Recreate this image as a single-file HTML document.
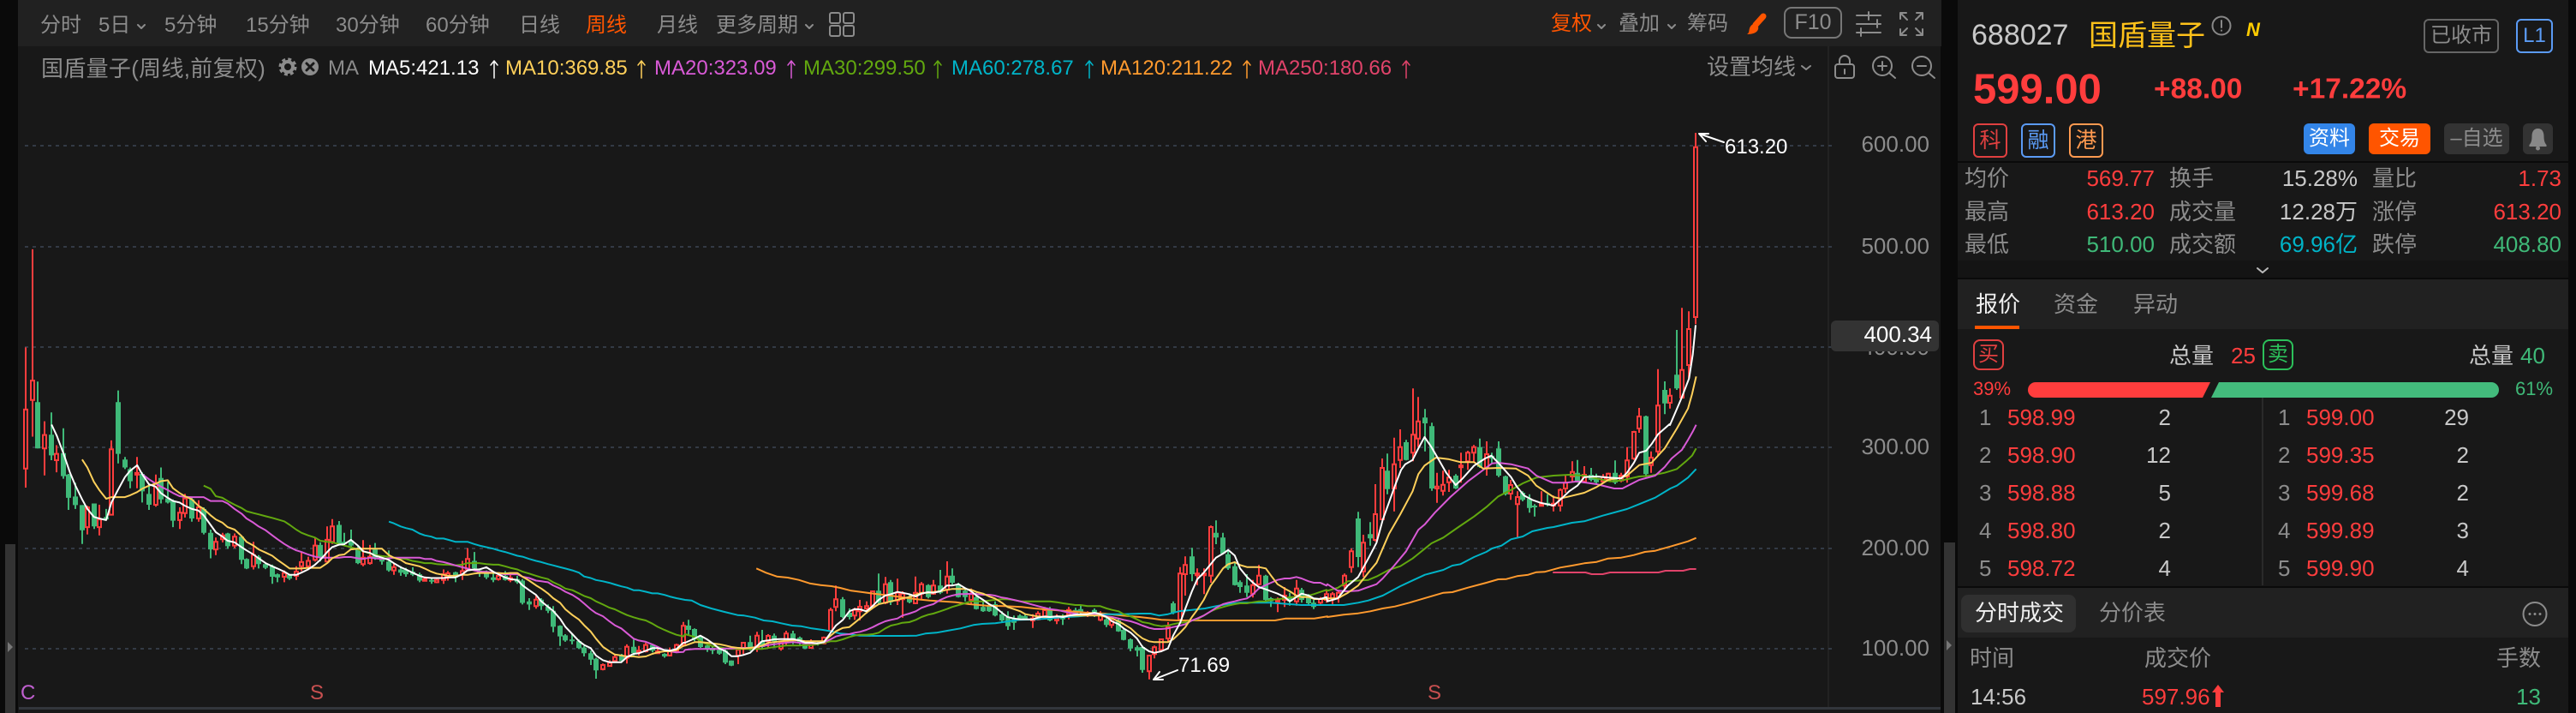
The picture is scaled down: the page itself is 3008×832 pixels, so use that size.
<!DOCTYPE html>
<html lang="zh"><head><meta charset="utf-8"><title>国盾量子</title>
<style>
html,body{margin:0;padding:0;width:3008px;height:832px;overflow:hidden;background:#0a0a0a}
body{position:relative;font-family:"Liberation Sans","Noto Sans CJK SC",sans-serif;color:#8c8c8c}
.b{position:absolute}
svg{position:absolute;left:0;top:0}
.t{position:absolute;white-space:nowrap;line-height:1;font-size:26px;transform:translateY(-50%)}
.r{transform:translate(-100%,-50%)}
.s24{font-size:24px}.red{color:#ff3d3d}.grn{color:#3fb978}.wht{color:#c8c8c8}.cyn{color:#00b4c8}
.box{position:absolute;box-sizing:border-box;border:2px solid;border-radius:6px;display:flex;align-items:center;justify-content:center;line-height:1}
.btn{position:absolute;border-radius:6px;display:flex;align-items:center;justify-content:center;line-height:1;font-size:24px}
</style></head><body>
<div class="b" style="left:21px;top:0;width:2246px;height:54px;background:#212121"></div>
<div class="b" style="left:21px;top:54px;width:2245px;height:778px;background:#181818"></div>
<div class="b" style="left:22px;top:825px;width:2244px;height:3px;background:#33363c"></div>
<div class="b" style="left:2134px;top:54px;width:2px;height:771px;background:#222"></div>
<div class="b" style="left:6px;top:635px;width:12px;height:197px;background:#333"></div>
<div class="b" style="left:2270px;top:633px;width:13px;height:199px;background:#333"></div>

<div class="b" style="left:2286px;top:0;width:713px;height:188px;background:#181818"></div>
<div class="b" style="left:2286px;top:190px;width:713px;height:114px;background:#181818"></div>
<div class="b" style="left:2286px;top:304px;width:713px;height:20px;background:#141414"></div>
<div class="b" style="left:2286px;top:326px;width:713px;height:58px;background:#212121"></div>
<div class="b" style="left:2286px;top:384px;width:713px;height:300px;background:#181818"></div>
<div class="b" style="left:2286px;top:686px;width:713px;height:58px;background:#212121"></div>
<div class="b" style="left:2286px;top:744px;width:713px;height:88px;background:#181818"></div>
<div class="b" style="left:2306px;top:380px;width:52px;height:4px;background:#ff5500"></div>
<div class="b" style="left:2641px;top:464px;width:2px;height:219px;background:#2a2a2a"></div>
<div class="b" style="left:2290px;top:694px;width:134px;height:44px;background:#303030;border-radius:8px"></div>
<div class="b" style="left:2946px;top:144px;width:35px;height:36px;background:#333;border-radius:6px"></div>

<svg id="chart" width="3008" height="832" viewBox="0 0 3008 832" fill="none"></svg>

<svg width="3008" height="832" viewBox="0 0 3008 832" fill="none" stroke-linecap="round" stroke-linejoin="round">
 <g stroke="#8c8c8c" stroke-width="2" fill="none">
  <path d="M161 29l4 4 4-4M941 29l4 4 4-4M1866 29l4 4 4-4M1948 29l4 4 4-4M2104 77l5 4 5-4"/>
  <rect x="969" y="15" width="12" height="12" rx="2"/><rect x="985" y="15" width="12" height="12" rx="2"/>
  <rect x="969" y="30" width="12" height="12" rx="2"/><rect x="985" y="30" width="12" height="12" rx="2"/>
  <path d="M2168 18h28M2168 28h28M2168 38h28M2182 14v9M2192 23v9M2173 33v9"/>
  <path d="M2219 22v-7h7M2219 15l8 8M2245 22v-7h-7M2245 15l-8 8M2219 34v7h7M2219 41l8-8M2245 34v7h-7M2245 41l-8-8"/>
  <rect x="2143" y="75" width="22" height="16" rx="3"/><path d="M2148 75v-4a6 6 0 0 1 12 0v4M2154 81v5"/>
  <circle cx="2198" cy="77" r="11"/><path d="M2206 85l7 6M2193 77h10M2198 72v10"/>
  <circle cx="2244" cy="77" r="11"/><path d="M2252 85l7 6M2239 77h10"/>
  <circle cx="2594" cy="30" r="10.500" stroke="#888"/>
  <path d="M2594 24v8M2594 35.500v.3" stroke="#888"/>
  <circle cx="2960" cy="716.500" r="13.500"/>
 </g>
 <g fill="#8c8c8c" stroke="none">
  <circle cx="2954" cy="716.500" r="1.500"/><circle cx="2960" cy="716.500" r="1.500"/><circle cx="2966" cy="716.500" r="1.500"/>
 </g>
 <circle cx="336" cy="78" r="8" stroke="#8c8c8c" stroke-width="5" stroke-dasharray="3.500 2.780" stroke-linecap="butt"/>
 <circle cx="336" cy="78" r="6" stroke="#8c8c8c" stroke-width="4"/>
 <circle cx="362" cy="78" r="10" fill="#8c8c8c"/>
 <path d="M358 74l8 8M366 74l-8 8" stroke="#181818" stroke-width="3"/>
 <path d="M2059 19l-9 10" stroke="#ff5500" stroke-width="7"/>
 <path d="M2049 28c3 1 5 3 4 6-1 4-6 6-13 6 3-2 2-4 3-7 1-3 3-5 6-5z" fill="#ff5500"/>
 <!-- MA arrows -->
 <g stroke-width="1.500">
  <path d="M577 91V71M573 76l4-5 4 5" stroke="#ffffff"/>
  <path d="M749 91V71M745 76l4-5 4 5" stroke="#ffd05a"/>
  <path d="M924 91V71M920 76l4-5 4 5" stroke="#d95ad6"/>
  <path d="M1095 91V71M1091 76l4-5 4 5" stroke="#62a80f"/>
  <path d="M1272 91V71M1268 76l4-5 4 5" stroke="#00b4c8"/>
  <path d="M1456 91V71M1452 76l4-5 4 5" stroke="#ff9a2e"/>
  <path d="M1642 91V71M1638 76l4-5 4 5" stroke="#e0436a"/>
 </g>
 <!-- annotations -->
 <path d="M2013 166L1984 156M1984 156l11 0M1984 156l8 9" stroke="#fff" stroke-width="2"/>
 <path d="M1375 782L1347 793M1347 793h11M1347 793l7-9" stroke="#fff" stroke-width="2"/>
 <!-- side arrows -->
 <path d="M9 749l6 6-6 6z" fill="#777"/><path d="M2273 747l6 6-6 6z" fill="#777"/>
 <!-- depth bar -->
 <path d="M2377 446H2581L2572 464H2377a9 9 0 0 1 0-18z" fill="#ff3d3d"/>
 <path d="M2591 446H2909a9 9 0 0 1 0 18H2582z" fill="#43bb7c"/>
 <path d="M2303 313l6 5 6-5" transform="translate(333 0)" stroke="#bbb" stroke-width="2"/>
 <!-- bell -->
 <path d="M2963.500 150c-5 0-7 4-7 9 0 5-1 8-3 10v2h20v-2c-2-2-3-5-3-10 0-5-2-9-7-9z" fill="#888"/>
 <circle cx="2963.500" cy="173" r="2.500" fill="#888"/>
 <!-- tick arrow -->
 <path d="M2590 799l7 9h-4v17h-6v-17h-4z" fill="#ff3d3d"/>
</svg>

<!-- toolbar -->
<span class="t s24" style="left:47px;top:30px">分时</span>
<span class="t s24" style="left:115px;top:30px">5日</span>
<span class="t s24" style="left:192px;top:30px">5分钟</span>
<span class="t s24" style="left:287px;top:30px">15分钟</span>
<span class="t s24" style="left:392px;top:30px">30分钟</span>
<span class="t s24" style="left:497px;top:30px">60分钟</span>
<span class="t s24" style="left:606px;top:30px">日线</span>
<span class="t s24" style="left:684px;top:30px;color:#ff5500">周线</span>
<span class="t s24" style="left:767px;top:30px">月线</span>
<span class="t s24" style="left:836px;top:30px">更多周期</span>
<span class="t s24" style="left:1811px;top:28px;color:#ff5500">复权</span>
<span class="t s24" style="left:1890px;top:28px">叠加</span>
<span class="t s24" style="left:1970px;top:28px">筹码</span>
<div class="box" style="left:2083px;top:8px;width:68px;height:37px;border-color:#777;border-radius:9px;font-size:25px;color:#8c8c8c">F10</div>

<!-- MA legend -->
<span class="t" style="left:48px;top:80px;letter-spacing:.3px">国盾量子(周线,前复权)</span>
<span class="t s24" style="left:383px;top:80px">MA</span>
<span class="t s24" style="left:430px;top:80px;color:#fff">MA5:421.13</span>
<span class="t s24" style="left:590px;top:80px;color:#ffd05a">MA10:369.85</span>
<span class="t s24" style="left:764px;top:80px;color:#d95ad6">MA20:323.09</span>
<span class="t s24" style="left:938px;top:80px;color:#62a80f">MA30:299.50</span>
<span class="t s24" style="left:1111px;top:80px;color:#00b4c8">MA60:278.67</span>
<span class="t s24" style="left:1285px;top:80px;color:#ff9a2e">MA120:211.22</span>
<span class="t s24" style="left:1469px;top:80px;color:#e0436a">MA250:180.66</span>
<span class="t" style="left:1993px;top:78px">设置均线</span>

<!-- axis -->
<span class="t r" style="left:2253px;top:168px">600.00</span>
<span class="t r" style="left:2253px;top:287px">500.00</span>
<span class="t r" style="left:2253px;top:405px">400.00</span>
<span class="t r" style="left:2253px;top:521px">300.00</span>
<span class="t r" style="left:2253px;top:639px">200.00</span>
<span class="t r" style="left:2253px;top:756px">100.00</span>
<div class="b" style="left:2138px;top:374px;width:126px;height:36px;background:#333;border-radius:6px"></div>
<span class="t r" style="left:2256px;top:390px;color:#fff">400.34</span>
<span class="t" style="left:2014px;top:172px;font-size:24px;color:#fff">613.20</span>
<span class="t" style="left:1376px;top:777px;font-size:24px;color:#fff">71.69</span>
<span class="t s24" style="left:24px;top:809px;color:#c060d0">C</span>
<span class="t s24" style="left:362px;top:809px;color:#c85050">S</span>
<span class="t s24" style="left:1667px;top:809px;color:#c85050">S</span>

<!-- header -->
<span class="t" style="left:2302px;top:41px;font-size:34px;color:#c8c8c8">688027</span>
<span class="t" style="left:2439px;top:42px;font-size:34px;color:#ffc21a">国盾量子</span>
<span class="t" style="left:2623px;top:35px;font-size:22px;font-weight:bold;font-style:italic;color:#ffcc00">N</span>
<div class="box" style="left:2830px;top:22px;width:88px;height:40px;border-color:#666;color:#8c8c8c;font-size:24px">已收市</div>
<div class="box" style="left:2938px;top:22px;width:43px;height:40px;border-color:#5b9bf5;color:#5b9bf5;font-size:24px">L1</div>
<span class="t" style="left:2304px;top:105px;font-size:49px;font-weight:bold;color:#ff3d3d">599.00</span>
<span class="t" style="left:2515px;top:104px;font-size:33.500px;font-weight:bold;color:#ff3d3d">+88.00</span>
<span class="t" style="left:2677px;top:104px;font-size:33.500px;font-weight:bold;color:#ff3d3d">+17.22%</span>
<div class="box" style="left:2304px;top:144px;width:40px;height:40px;border-color:#e04040;color:#e04040;font-size:25px">科</div>
<div class="box" style="left:2360px;top:144px;width:40px;height:40px;border-color:#5b9bf5;color:#5b9bf5;font-size:25px">融</div>
<div class="box" style="left:2416px;top:144px;width:40px;height:40px;border-color:#ff9a50;color:#ff9a50;font-size:25px">港</div>
<div class="btn" style="left:2690px;top:144px;width:60px;height:36px;background:#3385e8;color:#fff">资料</div>
<div class="btn" style="left:2766px;top:144px;width:72px;height:36px;background:#ff5500;color:#fff">交易</div>
<div class="btn" style="left:2854px;top:144px;width:76px;height:36px;background:#333;color:#8c8c8c">–自选</div>

<!-- stats -->
<span class="t" style="left:2294px;top:208px">均价</span><span class="t r red" style="left:2516px;top:208px">569.77</span>
<span class="t" style="left:2533px;top:208px">换手</span><span class="t r wht" style="left:2753px;top:208px">15.28%</span>
<span class="t" style="left:2770px;top:208px">量比</span><span class="t r red" style="left:2991px;top:208px">1.73</span>
<span class="t" style="left:2294px;top:247px">最高</span><span class="t r red" style="left:2516px;top:247px">613.20</span>
<span class="t" style="left:2533px;top:247px">成交量</span><span class="t r wht" style="left:2753px;top:247px">12.28万</span>
<span class="t" style="left:2770px;top:247px">涨停</span><span class="t r red" style="left:2991px;top:247px">613.20</span>
<span class="t" style="left:2294px;top:285px">最低</span><span class="t r grn" style="left:2516px;top:285px">510.00</span>
<span class="t" style="left:2533px;top:285px">成交额</span><span class="t r cyn" style="left:2753px;top:285px">69.96亿</span>
<span class="t" style="left:2770px;top:285px">跌停</span><span class="t r grn" style="left:2991px;top:285px">408.80</span>

<span class="t" style="left:2307px;top:355px;color:#f0f0f0">报价</span>
<span class="t" style="left:2398px;top:355px">资金</span>
<span class="t" style="left:2491px;top:355px">异动</span>

<!-- order book -->
<div class="box" style="left:2304px;top:396px;width:36px;height:36px;border-color:#e04040;color:#e04040;border-radius:8px;font-size:24px">买</div>
<span class="t wht" style="left:2533px;top:415px">总量</span><span class="t red" style="left:2605px;top:415px">25</span>
<div class="box" style="left:2642px;top:396px;width:36px;height:36px;border-color:#2cc05a;color:#2cc05a;border-radius:8px;font-size:24px">卖</div>
<span class="t wht" style="left:2883px;top:415px">总量</span><span class="t grn" style="left:2943px;top:415px">40</span>
<span class="t red" style="left:2304px;top:454px;font-size:22px">39%</span>
<span class="t grn" style="left:2937px;top:454px;font-size:22px">61%</span>

<span class="t" style="left:2311px;top:487px">1</span><span class="t red" style="left:2344px;top:487px">598.99</span><span class="t r wht" style="left:2535px;top:487px">2</span>
<span class="t" style="left:2311px;top:531px">2</span><span class="t red" style="left:2344px;top:531px">598.90</span><span class="t r wht" style="left:2535px;top:531px">12</span>
<span class="t" style="left:2311px;top:575px">3</span><span class="t red" style="left:2344px;top:575px">598.88</span><span class="t r wht" style="left:2535px;top:575px">5</span>
<span class="t" style="left:2311px;top:619px">4</span><span class="t red" style="left:2344px;top:619px">598.80</span><span class="t r wht" style="left:2535px;top:619px">2</span>
<span class="t" style="left:2311px;top:663px">5</span><span class="t red" style="left:2344px;top:663px">598.72</span><span class="t r wht" style="left:2535px;top:663px">4</span>
<span class="t" style="left:2660px;top:487px">1</span><span class="t red" style="left:2693px;top:487px">599.00</span><span class="t r wht" style="left:2883px;top:487px">29</span>
<span class="t" style="left:2660px;top:531px">2</span><span class="t red" style="left:2693px;top:531px">599.35</span><span class="t r wht" style="left:2883px;top:531px">2</span>
<span class="t" style="left:2660px;top:575px">3</span><span class="t red" style="left:2693px;top:575px">599.68</span><span class="t r wht" style="left:2883px;top:575px">2</span>
<span class="t" style="left:2660px;top:619px">4</span><span class="t red" style="left:2693px;top:619px">599.89</span><span class="t r wht" style="left:2883px;top:619px">3</span>
<span class="t" style="left:2660px;top:663px">5</span><span class="t red" style="left:2693px;top:663px">599.90</span><span class="t r wht" style="left:2883px;top:663px">4</span>

<!-- trades -->
<span class="t" style="left:2306px;top:715px;color:#f0f0f0">分时成交</span>
<span class="t" style="left:2451px;top:715px">分价表</span>
<span class="t" style="left:2300px;top:768px">时间</span>
<span class="t" style="left:2504px;top:768px">成交价</span>
<span class="t r" style="left:2967px;top:768px">手数</span>
<span class="t wht" style="left:2301px;top:813px">14:56</span>
<span class="t red" style="left:2501px;top:813px">597.96</span>
<span class="t r grn" style="left:2967px;top:813px">13</span>

<script>
(function(){
var Z={a:[function(p){return p/1.96},function(p){return 250+p/2.69}],
b:[function(p){return 800+p/1.96},function(p){return 500+p/3}],
c:[function(p){return 1550+p/2.09},function(p){return 420+p/3}],
d:[function(p){return 1850+p/3},function(p){return 130+p/3}]};
var C={
a:"59 r 418 613 798 858;74 r 110 522 583 698;86 g 525 590 735 735;101 r 650 693 735 820;117 g 622 692 757 772;129 r 725 752 772 810;145 g 672 750 822 830;157 g 815 817 890 928;172 g 843 886 913 925;188 g 913 913 992 1035;200 r 915 920 982 1005;215 g 908 908 980 988;227 r 912 958 982 1008;243 g 925 950 958 960;255 r 710 738 943 943;270 g 553 590 752 782;286 g 762 770 795 800;298 g 795 800 838 860;313 r 762 812 815 860;325 g 810 815 870 905;341 g 845 878 912 928;356 r 817 845 912 918;368 g 795 828 895 908;384 g 840 892 905 908;396 g 895 900 962 982;411 r 920 937 960 988;423 r 878 892 938 952;439 g 888 895 955 965;454 r 898 920 955 965;466 g 920 925 1000 1005;482 g 990 1000 1052 1080;494 r 1015 1028 1052 1070;509 r 1000 1008 1020 1030;521 g 1000 1002 1042 1050;537 r 1002 1012 1040 1048;553 g 1010 1012 1085 1098;564 g 1080 1082 1112 1114;580 r 1028 1070 1105 1115;592 g 1070 1075 1098 1112;608 g 1095 1098 1110 1114;623 g 1100 1105 1138 1160;635 g 1128 1130 1140 1155;651 r 1118 1126 1138 1155;663 g 1130 1132 1144 1148;678 r 1105 1122 1135 1148;690 r 1060 1092 1105 1120;705 r 1075 1088 1105 1112;721 r 1015 1040 1085 1090;733 g 1030 1038 1078 1090;749 r 980 1022 1090 1092;760 r 957 980 1028 1035;776 g 963 975 1035 1040;788 g 1000 1028 1035 1040;803 g 990 1024 1040 1052;819 g 1040 1050 1095 1098;831 r 1023 1078 1098 1105;847 r 1038 1075 1095 1100;859 g 1032 1052 1080 1085;874 g 1078 1082 1090 1100;890 g 1055 1090 1118 1122;901 r 1095 1108 1118 1132;917 g 1105 1115 1125 1135;929 g 1110 1116 1130 1138;944 g 1108 1122 1132 1136;960 g 1125 1130 1150 1155;972 r 1140 1145 1148 1150;987 g 1140 1148 1152 1160;999 r 1145 1148 1155 1158;1015 r 1115 1130 1148 1160;1026 r 1120 1127 1140 1150;1042 g 1122 1124 1140 1155;1058 r 1088 1120 1130 1148;1070 r 1048 1082 1115 1120;1085 g 1060 1088 1112 1120;1097 g 1112 1118 1125 1138;1113 g 1118 1128 1140 1145;1129 g 1128 1140 1148 1155;1141 r 1130 1135 1145 1150;1156 g 1120 1135 1148 1150;1168 r 1128 1142 1148 1155;1184 g 1135 1145 1155 1160;1196 g 1145 1150 1220 1225;1211 g 1205 1215 1225 1242;1227 r 1195 1210 1230 1238;1239 g 1205 1210 1230 1242;1254 g 1225 1232 1245 1252;1266 g 1230 1245 1295 1312;1282 g 1290 1292 1325 1355;1294 g 1318 1322 1338 1342;1310 g 1318 1335 1337 1350;1325 g 1335 1340 1362 1365;1337 g 1355 1360 1378 1388;1352 g 1370 1378 1398 1415;1364 g 1392 1395 1432 1458;1380 r 1410 1415 1428 1432;1395 r 1400 1408 1418 1420;1407 r 1382 1390 1402 1405;1422 g 1380 1385 1402 1405;1435 r 1350 1358 1392 1410;1450 g 1335 1358 1378 1385;1462 r 1355 1370 1375 1385;1478 r 1345 1352 1372 1375;1493 g 1350 1352 1370 1375;1505 r 1365 1372 1378 1380;1521 g 1378 1380 1388 1392;1533 r 1360 1372 1385 1388;1548 r 1348 1352 1372 1375;1564 r 1280 1292 1352 1358",
b:"8 g 670 690 705 725;22 g 700 702 738 745;35 g 725 728 765 768;50 g 755 760 772 782;63 g 762 768 778 790;78 g 770 775 788 792;93 g 768 778 820 825;106 g 812 812 830 832;121 r 770 775 795 825;133 r 748 750 770 790;149 g 725 748 775 778;164 r 712 725 770 782;176 g 705 745 765 770;191 r 720 726 745 768;204 g 718 725 745 768;219 r 745 750 770 778;231 r 708 718 745 760;247 g 708 718 740 755;262 g 728 732 752 760;275 g 745 752 770 772;289 r 738 748 768 770;303 g 745 750 755 760;318 r 728 732 752 755;333 r 628 635 708 715;345 r 550 598 625 640;361 g 590 598 660 664;376 g 630 645 660 668;388 r 628 635 655 670;400 r 600 624 640 672;415 r 605 622 630 648;430 r 568 570 620 630;443 g 508 568 610 615;458 r 520 545 610 615;471 g 530 538 608 618;486 r 526 575 602 618;497 r 570 578 598 662;513 g 578 590 608 612;528 r 518 575 612 615;541 r 538 545 578 600;556 g 545 548 590 595;568 r 530 550 578 582;584 g 495 550 575 580;599 r 465 518 565 578;611 g 490 515 540 548;626 g 540 545 590 592;640 g 560 568 590 605;655 r 560 580 600 618;667 g 570 590 632 634;682 g 600 625 640 642;696 g 615 620 640 642;709 g 605 615 655 658;725 g 640 650 672 678;738 g 640 660 692 705;752 g 655 665 680 705;767 g 650 655 665 672;779 g 650 656 666 672;796 r 650 665 672 698;808 r 640 648 668 672;823 r 625 636 660 668;835 g 625 632 672 675;851 r 650 665 672 685;865 g 650 660 668 688;879 r 625 635 652 668;893 g 628 635 648 655;905 g 620 632 645 652;921 r 640 645 652 660;937 g 630 635 650 660;950 r 640 648 670 675;965 g 660 668 688 695;977 r 668 675 688 698;992 g 665 672 710 712;1004 g 700 705 740 742;1020 g 735 738 770 780;1034 g 760 766 778 798;1047 g 760 765 845 855;1062 r 792 795 850 878;1074 r 760 766 790 805;1090 r 735 738 775 782;1105 r 678 695 735 745;1117 g 605 612 645 650;1133 r 485 508 670 675;1145 r 448 478 510 585;1160 g 418 448 510 535;1172 r 490 508 512 548;1187 r 490 508 512 580;1203 r 340 345 515 540;1215 g 322 365 382 405;1231 g 365 382 438 440;1243 g 425 440 490 495;1258 g 470 482 548 550;1270 g 532 538 555 575;1286 g 510 550 575 590;1300 r 530 548 578 592;1313 r 478 515 545 550;1329 g 512 515 600 605;1341 g 590 594 605 625;1356 r 592 600 605 643;1372 r 555 585 600 625;1384 g 575 590 605 620;1399 r 530 560 605 620;1411 g 558 565 600 610;1427 g 580 590 612 615;1439 g 600 610 625 632;1454 r 590 597 610 618;1468 r 568 580 600 610",
c:"12 r 812 820 835 855;27 r 805 815 830 850;42 r 748 755 790 810;58 r 660 670 725 745;75 g 532 555 690 725;88 r 612 640 740 760;104 g 568 610 625 650;117 r 435 540 630 635;134 r 345 378 558 560;147 g 328 388 452 470;163 r 272 365 450 530;178 r 243 305 350 378;192 g 280 288 350 352;208 r 100 262 325 355;222 r 130 215 275 305;238 g 172 202 222 320;254 g 220 232 450 458;267 r 395 443 450 500;283 r 388 437 458 475;297 r 385 412 428 462;313 g 400 405 450 452;325 r 325 370 375 430;343 r 318 325 355 385;358 r 298 305 325 358;372 g 275 305 375 378;388 r 285 330 378 405;402 g 325 335 345 360;417 g 285 310 405 410;434 g 405 407 470 475;448 r 420 438 468 490;463 r 460 480 505 620;477 g 460 465 490 495;493 g 470 485 518 535;506 g 505 510 515 548;522 r 460 505 510 512;537 g 470 500 508 512;552 r 475 503 510 530;568 r 450 455 510 530;582 r 405 430 450 465;597 r 355 392 408 425;610 g 350 395 425 430;627 r 372 402 425 432;644 g 378 402 420 425;657 g 398 415 428 435;672 r 400 410 425 432;686 r 395 398 420 425;703 g 352 395 430 435;717 r 395 405 422 428;731 r 305 352 408 430;748 r 248 252 345 350;761 r 168 198 240 255;778 g 195 197 400 410;791 r 320 342 368 395;807 r 32 160 320 335",
d:"282 g 945 975 1022 1060;300 r 970 995 1020 1040;324 g 765 922 970 975;342 r 688 905 1002 1005;366 r 700 762 888 935;390 r 75 125 720 745"};
var L=[
["#e0436a",[["c","550,744 630,744 645,750 672,750 690,744 808,744 825,738 868,738 885,732 900,732"]]],
["#ff9a2e",[["b","163,490 185,505 210,518 235,522 260,530 285,542 310,548 335,552 355,558 380,568 410,574 440,580 470,585 500,592 530,598 560,602 590,605 620,608 650,615 690,620 730,622 770,625 800,630 840,635 880,640 920,645 960,648 1000,655 1040,660 1070,665 1090,670 1130,672 1200,672 1280,672 1350,672 1375,665 1440,665 1470,658"],["c","0,900 40,892 75,887 105,880 135,870 165,863 200,850 240,833 283,815 305,813 343,797 388,780 417,768 437,767 463,757 490,752 510,743 530,742 568,727 597,720 627,712 657,707 685,695 717,692 748,683 775,672 800,668 840,652 880,635 900,623"]]],
["#00b4c8",[["a","890,965 901,970 917,980 929,985 944,990 960,1002 972,1008 987,1012 999,1018 1015,1018 1026,1022 1042,1028 1058,1028 1070,1028 1085,1035 1097,1040 1113,1045 1129,1050 1141,1055 1156,1060 1168,1065 1184,1072 1196,1075 1211,1082 1227,1088 1239,1092 1254,1098 1266,1102 1282,1108 1294,1112 1310,1118 1325,1125 1337,1137 1352,1142 1364,1148 1380,1152 1395,1157 1407,1162 1422,1168 1435,1172 1450,1180 1462,1180 1478,1185 1493,1190 1505,1190 1521,1195 1533,1200 1548,1205"],["b","0,600 15,602 35,618 60,630 90,642 120,653 135,655 160,662 180,672 200,675 220,682 245,690 265,692 290,700 315,705 335,710 355,718 375,720 400,725 430,726 470,726 500,726 530,725 550,718 575,715 600,708 630,700 660,688 680,684 710,682 740,675 765,670 800,668 830,665 870,660 900,658 940,652 970,650 1000,650 1040,648 1065,648 1085,655 1105,650 1130,640 1160,635 1190,630 1215,622 1240,615 1270,610 1300,610 1340,610 1384,615 1410,618 1440,618"],["c","0,858 40,858 75,850 100,842 135,825 178,792 208,772 238,752 283,735 305,720 325,715 358,690 388,672 402,660 425,650 448,628 477,618 500,600 537,588 552,585 597,570 627,565 672,545 731,522 761,505 800,482 837,450 853,440 880,412 900,382"]]],
["#62a80f",[["a","466,852 482,862 494,885 509,890 521,900 537,912 553,922 564,932 580,938 592,942 608,948 623,953 635,958 651,964 663,975 678,990 690,1000 705,1008 721,1015 733,1025 749,1028 760,1030 776,1035 788,1040 803,1045 819,1052 831,1058 847,1065 859,1070 874,1073 890,1075 901,1078 917,1080 929,1082 944,1088 960,1092 972,1095 987,1095 999,1098 1015,1100 1026,1100 1042,1102 1058,1100 1070,1095 1085,1095 1097,1095 1113,1098 1129,1100 1141,1100 1156,1105 1168,1110 1184,1115 1196,1122 1211,1128 1227,1135 1239,1140 1254,1145 1266,1155 1282,1165 1294,1175 1310,1180 1325,1190 1337,1198 1352,1205 1364,1215 1380,1225 1395,1235 1407,1240 1422,1250 1435,1258 1450,1265 1462,1270 1478,1275 1493,1285 1505,1295 1521,1305 1533,1312 1548,1320 1564,1325"],["b","0,720 22,730 35,745 50,755 63,762 78,765 93,770 106,772 121,772 133,772 149,772 164,772 176,772 191,768 204,765 219,762 231,760 247,760 262,760 275,758 289,758 303,755 318,750 333,745 345,745 361,738 376,730 388,725 400,722 415,722 430,720 443,715 458,700 471,690 486,685 497,680 513,678 528,670 541,660 556,652 568,648 584,640 599,632 611,625 626,618 640,612 655,605 667,605 682,605 696,602 709,600 725,598 738,598 752,600 767,605 779,605 796,605 808,605 823,605 835,605 851,608 865,612 879,615 893,618 905,618 921,622 937,622 950,622 965,630 977,635 992,640 1004,650 1020,658 1034,668 1047,678 1062,682 1074,688 1090,692 1105,690 1117,685 1133,680 1145,678 1160,672 1172,668 1187,655 1203,640 1215,632 1231,625 1243,620 1258,615 1270,612 1286,612 1300,608 1313,605 1329,605 1341,600 1356,598 1372,595 1384,590 1399,590 1411,590 1427,585 1439,580 1454,572 1468,565"],["c","0,808 25,798 50,775 100,770 120,758 150,735 178,722 208,695 254,642 283,622 320,585 358,548 388,515 417,478 448,455 477,432 510,412 552,405 590,402 627,405 657,415 690,425 717,422 761,408 790,405 823,395 853,382 875,355 890,335 900,310"]]],
["#d95ad6",[["a","325,815 341,832 356,845 368,855 384,866 396,875 411,885 423,887 439,888 454,888 466,888 482,900 494,900 509,900 521,908 537,925 553,940 564,955 580,968 592,980 608,992 623,1008 635,1020 651,1035 663,1045 678,1055 690,1060 705,1068 721,1075 733,1078 749,1078 760,1078 776,1078 788,1076 803,1076 819,1080 831,1082 847,1078 859,1080 874,1082 890,1080 901,1078 917,1078 929,1078 944,1078 960,1078 972,1082 987,1082 999,1088 1015,1092 1026,1096 1042,1102 1058,1108 1070,1112 1085,1118 1097,1122 1113,1122 1129,1125 1141,1128 1156,1130 1168,1130 1184,1130 1196,1138 1211,1142 1227,1150 1239,1152 1254,1155 1266,1165 1282,1175 1294,1185 1310,1195 1325,1208 1337,1222 1352,1240 1364,1252 1380,1262 1395,1278 1407,1290 1422,1300 1435,1315 1450,1332 1462,1338 1478,1342 1493,1350 1505,1358 1521,1368 1533,1372 1548,1375 1564,1374"],["b","0,775 22,772 35,772 50,772 63,772 78,772 93,770 106,770 121,768 133,768 149,768 164,765 176,762 191,758 204,755 219,752 231,750 247,748 262,750 275,752 289,752 303,752 318,748 333,738 345,728 361,722 376,720 388,715 400,712 415,705 430,695 443,685 458,675 471,670 486,665 497,655 513,648 528,640 541,628 556,620 568,615 584,600 599,590 611,585 626,580 640,580 655,578 667,580 682,582 696,582 709,585 725,592 738,595 752,600 767,605 779,610 796,617 808,622 823,628 835,632 851,635 865,640 879,645 893,648 905,652 921,655 937,650 950,650 965,658 977,660 992,665 1004,670 1020,675 1034,682 1047,690 1062,698 1074,702 1090,702 1105,700 1117,695 1133,690 1145,685 1160,672 1172,665 1187,655 1203,640 1215,628 1231,615 1243,610 1258,605 1270,600 1286,595 1300,580 1313,560 1329,548 1341,540 1356,530 1372,525 1384,525 1399,520 1411,525 1427,535 1439,540 1454,540 1468,550"],["c","0,785 25,808 50,810 75,808 100,795 120,785 135,765 163,720 192,670 222,595 238,575 262,535 300,480 343,425 385,380 402,362 417,360 448,365 490,380 510,405 550,430 582,430 610,425 657,435 700,450 720,450 761,420 800,405 823,375 840,345 865,315 880,280 892,250 900,227"]]],
["#ffd05a",[["a","188,770 200,795 215,840 227,865 243,893 255,888 270,888 286,888 298,882 314,872 325,862 341,852 356,846 368,838 384,835 396,860 411,875 423,885 439,895 454,915 466,925 482,945 494,958 509,968 521,982 537,990 553,1010 564,1028 580,1040 592,1052 608,1062 623,1072 635,1085 651,1100 663,1112 678,1112 690,1112 705,1110 721,1110 733,1110 749,1095 760,1080 776,1070 788,1068 803,1052 819,1050 831,1050 847,1050 859,1050 874,1050 890,1070 901,1078 917,1085 929,1095 944,1100 960,1105 972,1112 987,1122 999,1128 1015,1132 1026,1135 1042,1135 1058,1132 1070,1132 1085,1128 1097,1126 1113,1126 1129,1126 1141,1126 1156,1128 1168,1126 1184,1126 1196,1138 1211,1150 1227,1165 1239,1175 1254,1190 1266,1205 1282,1220 1294,1240 1310,1258 1325,1272 1337,1290 1352,1310 1364,1332 1380,1358 1395,1372 1407,1382 1422,1385 1435,1388 1450,1388 1462,1390 1478,1388 1493,1380 1505,1375 1521,1372 1533,1372 1548,1368 1564,1355"],["b","0,760 22,748 35,748 50,750 63,752 78,755 93,760 106,765 121,768 133,770 149,768 164,765 176,760 191,750 204,748 219,745 231,743 247,742 262,742 275,745 289,745 303,745 318,745 333,725 345,710 361,698 376,695 388,680 400,665 415,645 430,628 443,615 458,610 471,605 486,600 497,595 513,590 528,582 541,575 556,575 568,572 584,570 599,565 611,562 626,562 640,562 655,565 667,572 682,578 696,588 709,595 725,610 738,625 752,632 767,640 779,650 796,655 808,658 823,660 835,660 851,658 865,658 879,655 893,655 905,655 921,655 937,655 950,655 965,660 977,665 992,675 1004,685 1020,700 1034,720 1047,735 1062,745 1074,748 1090,748 1105,748 1117,738 1133,715 1145,695 1160,660 1172,635 1187,600 1203,550 1215,525 1231,490 1243,475 1258,468 1270,478 1286,485 1300,485 1313,485 1329,490 1341,515 1356,545 1372,560 1384,570 1399,585 1411,590 1427,590 1439,597 1454,597 1468,597"],["c","0,835 25,835 50,815 75,790 100,745 120,710 150,610 178,540 208,460 222,400 237,370 265,342 295,347 325,358 358,358 380,380 417,378 460,380 490,405 510,440 552,480 568,485 590,478 627,465 657,445 685,420 717,412 731,405 761,368 791,360 823,310 853,240 880,170 890,120 900,58"]]],
["#ffffff",[["a","118,660 130,695 145,750 160,810 172,850 188,895 200,925 215,950 227,955 243,960 255,905 270,865 286,825 298,805 314,788 325,815 341,848 356,855 368,875 384,890 396,900 411,905 423,915 439,925 454,930 466,945 482,975 494,998 509,1012 521,1025 537,1030 553,1045 564,1055 580,1068 592,1080 608,1095 623,1105 635,1112 651,1122 663,1132 678,1132 690,1125 705,1115 721,1100 733,1085 749,1060 760,1045 776,1037 788,1036 803,1022 819,1040 831,1058 847,1063 859,1072 874,1078 890,1085 901,1095 917,1108 929,1115 944,1125 960,1135 972,1140 987,1142 999,1142 1015,1142 1026,1140 1042,1140 1058,1130 1070,1118 1085,1115 1097,1115 1113,1108 1129,1122 1141,1130 1156,1140 1168,1145 1184,1148 1196,1165 1211,1180 1227,1195 1239,1215 1254,1232 1266,1245 1282,1270 1294,1295 1310,1318 1325,1340 1337,1352 1352,1362 1364,1385 1380,1400 1395,1406 1407,1406 1422,1406 1435,1390 1450,1380 1462,1378 1478,1370 1493,1362 1505,1362 1521,1368 1533,1370 1548,1365 1564,1345"],["b","0,750 22,735 35,725 50,738 63,752 78,770 93,780 106,797 121,797 133,793 149,785 164,762 176,745 191,742 204,738 219,737 231,737 247,737 262,742 275,750 289,750 303,752 318,748 333,715 345,690 361,670 376,640 388,632 400,633 415,640 430,620 443,600 458,585 471,580 486,572 497,575 513,580 528,588 541,578 556,573 568,575 584,570 599,550 611,550 626,545 640,558 655,570 667,585 682,600 696,615 709,625 725,645 738,660 752,665 767,668 779,668 796,668 808,662 823,658 835,660 851,658 865,660 879,655 893,652 905,650 921,650 937,645 950,650 965,660 977,675 992,685 1004,700 1020,715 1034,735 1047,765 1062,780 1074,785 1090,780 1105,770 1117,725 1133,680 1145,630 1160,570 1172,528 1187,505 1203,475 1215,452 1231,438 1243,425 1258,445 1270,490 1286,520 1300,540 1313,555 1329,563 1341,570 1356,578 1372,590 1384,605 1399,590 1411,578 1427,585 1439,595 1454,597 1468,590"],["c","0,845 25,835 50,790 75,760 100,695 120,640 135,560 150,500 165,440 180,385 190,365 208,350 222,310 237,270 254,305 270,345 290,395 313,438 330,415 358,370 385,345 400,335 417,360 448,410 463,445 480,475 500,490 520,500 552,510 568,490 590,460 610,440 627,410 657,408 685,412 717,415 731,395 748,360 761,325 778,318 791,295 807,260 835,225"],["d","300,1098 340,1005 367,935 380,850 390,748"]]]
];
var s='';
[170,288,405,522,640,757].forEach(function(y){s+='<path d="M29 '+y+'H2140" stroke="#333a45" stroke-width="2" stroke-dasharray="4 5"/>';});
var grn='',wg='',wr='',red='';
Object.keys(C).forEach(function(k){
 var fx=Z[k][0],fy=Z[k][1];
 C[k].split(';').forEach(function(e){
  var a=e.split(' '),x=Math.round(fx(+a[0])),h=fy(+a[2]).toFixed(1),t=fy(+a[3]).toFixed(1),b=fy(+a[4]).toFixed(1),l=fy(+a[5]).toFixed(1);
  if(b-t<2)b=(+t+2).toFixed(1);
  if(a[1]=='g'){wg+='M'+x+' '+h+'V'+l;grn+='M'+(x-3)+' '+t+'h6V'+b+'h-6z';}
  else{wr+='M'+x+' '+h+'V'+t+'M'+x+' '+b+'V'+l;red+='M'+(x-2)+' '+t+'h4V'+b+'h-4z';}
 });
});
s+='<path d="'+wg+'" stroke="#3fb978" stroke-width="2"/><path d="'+grn+'" fill="#3fb978"/>';
s+='<path d="'+wr+'" stroke="#ff3d3d" stroke-width="2"/><path d="'+red+'" stroke="#ff3d3d" stroke-width="2" fill="#181818"/>';
L.forEach(function(m){
 var pts=[];
 m[1].forEach(function(seg){
  var z=Z[seg[0]];
  seg[1].split(' ').forEach(function(p){var q=p.split(',');pts.push(z[0](+q[0]).toFixed(1)+','+z[1](+q[1]).toFixed(1));});
 });
 s+='<polyline points="'+pts.join(' ')+'" stroke="'+m[0]+'" stroke-width="2" stroke-linejoin="round"/>';
});
document.getElementById('chart').innerHTML=s;
})();
</script>
</body></html>
